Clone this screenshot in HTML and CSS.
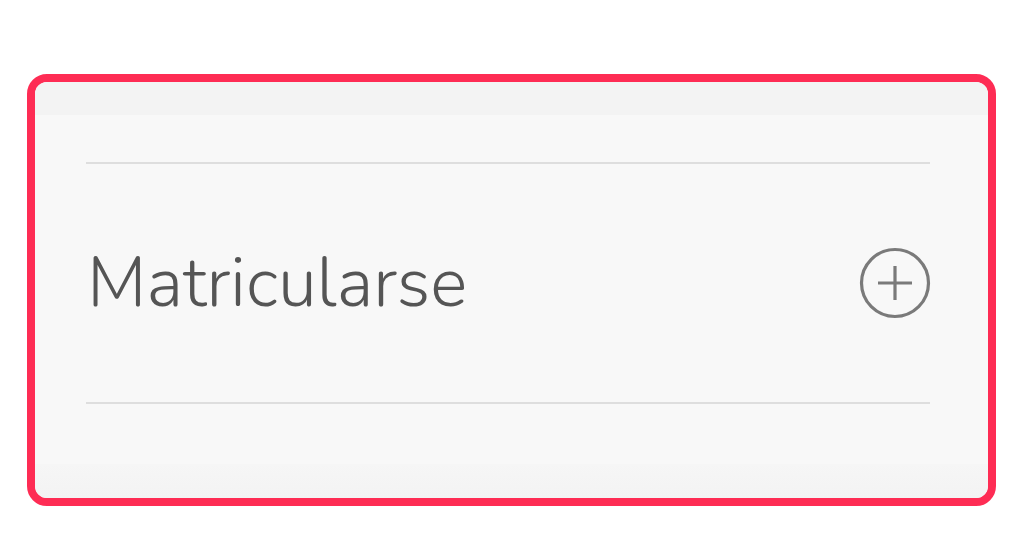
FILE: index.html
```html
<!DOCTYPE html>
<html lang="es">

<head>
    <meta charset="UTF-8">
    <title>Matricularse</title>
    <link rel="stylesheet" href="styles.css">
</head>

<body>
    <div class="card">
        <div class="band-top"></div>
        <div class="content">
            <div class="item">
                <span class="item-title">Matricularse</span>
                <svg class="item-icon" width="72" height="72" viewBox="0 0 72 72">
                    <circle cx="36" cy="36" r="33.5" fill="none" stroke="#7a7a7a" stroke-width="3.2"/>
                    <path d="M19 36 H53 M36 19 V53" stroke="#7a7a7a" stroke-width="3.2"/>
                </svg>
            </div>
        </div>
        <div class="band-bottom"></div>
    </div>
</body>

</html>
```

FILE: styles.css
```css
body {
    margin: 0;
    padding: 0;
    background-color: #fff;
    font-family: "Nunito", "Lato", sans-serif;
}

.card {
    margin: 74px 0 0 27px;
    width: 969px;
    height: 432px;
    box-sizing: border-box;
    border: 8px solid #fe2c54;
    border-radius: 20px;
    background-color: #f8f8f8;
    overflow: hidden;
    display: flex;
    flex-direction: column;
}

.band-top {
    height: 33px;
    background-color: #f3f3f3;
}

.band-bottom {
    height: 34px;
    background: linear-gradient(#f6f6f6, #f3f3f3);
}

.content {
    flex: 1;
    padding: 47px 58px 0 51px;
}

.item {
    display: flex;
    align-items: center;
    justify-content: space-between;
    height: 242px;
    border-top: 2px solid #dedede;
    border-bottom: 2px solid #dedede;
    box-sizing: border-box;
}

.item-title {
    font-size: 70px;
    font-weight: 300;
    color: #555;
    padding-left: 1px;
}

.item-icon {
    display: block;
    margin-right: -1px;
}
```
